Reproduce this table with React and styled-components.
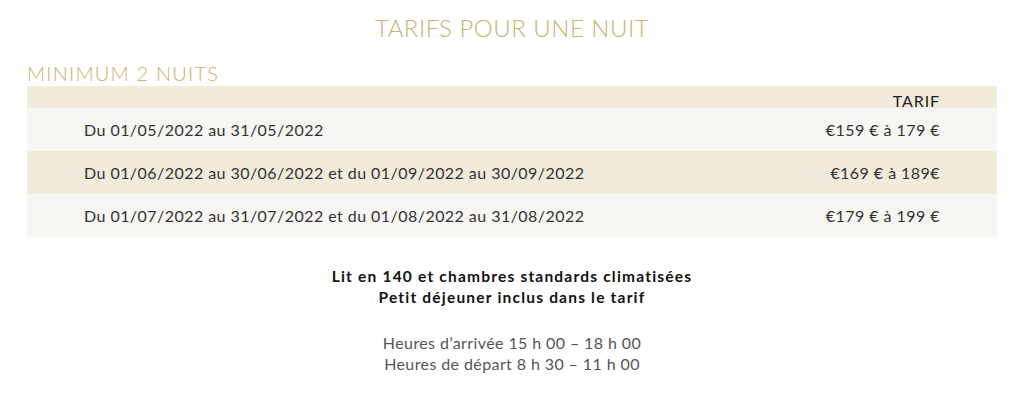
import React from "react";
import styled, { createGlobalStyle } from "styled-components";

const Global = createGlobalStyle`
  html, body { margin: 0; padding: 0; background: #fff; }
  body { font-family: "Lato", "Liberation Sans", sans-serif; }
`;

const Page = styled.div`
  width: 1024px;
  box-sizing: border-box;
  padding: 13px 27px 0;
  display: flex;
  flex-direction: column;
`;

const Title = styled.h2`
  margin: 0;
  text-align: center;
  font-weight: 300;
  font-size: 24px;
  line-height: 30px;
  letter-spacing: 0.5px;
  color: #c9b16e;
`;

const SubTitle = styled.h3`
  margin: 18px 0 0;
  font-weight: 300;
  font-size: 20px;
  line-height: 25px;
  letter-spacing: 1.2px;
  color: #c9b16e;
`;

const Table = styled.div`
  display: flex;
  flex-direction: column;
`;

const Row = styled.div`
  display: flex;
  align-items: center;
  justify-content: space-between;
  height: ${(p) => p.$h}px;
  background: ${(p) => (p.$alt ? "#f0ebdb" : "#f7f6f2")};
  padding: 0 57px 0 57px;
  font-size: 16px;
  letter-spacing: 0.45px;
  color: #333;
`;

const Cell = styled.span`
  font-weight: 400;
`;

const HeadCell = styled.span`
  margin-left: auto;
  font-size: 16px;
  letter-spacing: 0.9px;
  color: #222;
  padding-top: 6px;
`;

const Info = styled.div`
  margin-top: 29px;
  text-align: center;
  font-size: 16px;
  line-height: 21px;
`;

const Bold = styled.p`
  margin: 0;
  font-weight: 700;
  font-size: 15.5px;
  letter-spacing: 1.2px;
  color: #111;
`;

const Light = styled.p`
  margin: 24px 0 0;
  font-weight: 400;
  letter-spacing: 0.4px;
  color: #555;
`;

const rows = [
  ["Du 01/05/2022 au 31/05/2022", "€159 € à 179 €"],
  ["Du 01/06/2022 au 30/06/2022 et du 01/09/2022 au 30/09/2022", "€169 € à 189€"],
  ["Du 01/07/2022 au 31/07/2022 et du 01/08/2022 au 31/08/2022", "€179 € à 199 €"],
];

export default function App() {
  return (
    <Page>
      <Global />
      <Title>TARIFS POUR UNE NUIT</Title>
      <SubTitle>MINIMUM 2 NUITS</SubTitle>
      <Table>
        <Row $h={22} $alt>
          <HeadCell>TARIF</HeadCell>
        </Row>
        {rows.map(([d, p], i) => (
          <Row key={i} $h={43} $alt={i % 2 === 1}>
            <Cell>{d}</Cell>
            <Cell>{p}</Cell>
          </Row>
        ))}
      </Table>
      <Info>
        <Bold>Lit en 140 et chambres standards climatisées</Bold>
        <Bold>Petit déjeuner inclus dans le tarif</Bold>
        <Light>
          Heures d’arrivée 15 h 00 – 18 h 00
          <br />
          Heures de départ 8 h 30 – 11 h 00
        </Light>
      </Info>
    </Page>
  );
}
